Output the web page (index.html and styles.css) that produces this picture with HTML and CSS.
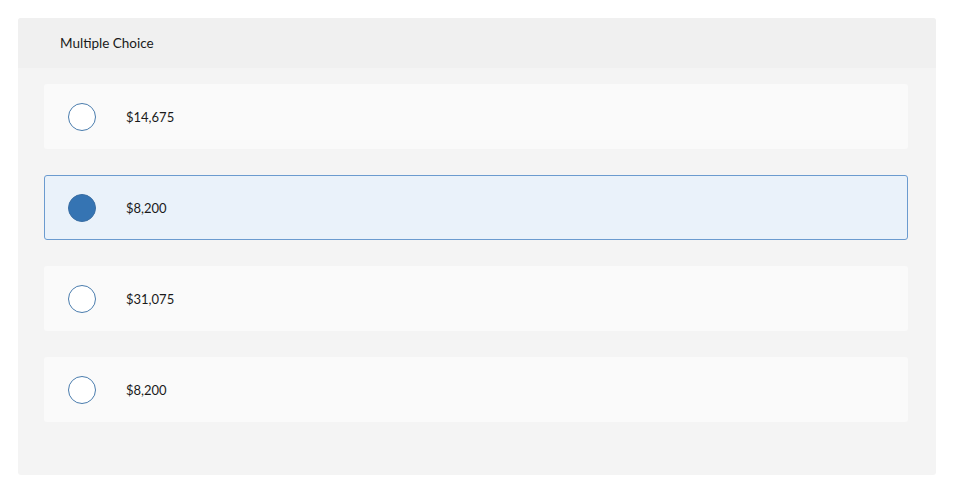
FILE: index.html
```html
<!DOCTYPE html>
<html>
<head>
<meta charset="utf-8">
<link rel="stylesheet" href="styles.css">
</head>
<body>
<div class="panel">
  <div class="panel-header">Multiple Choice</div>
  <div class="panel-body">
    <div class="option"><span class="radio"></span><span class="label">$14,675</span></div>
    <div class="option selected"><span class="radio"></span><span class="label">$8,200</span></div>
    <div class="option"><span class="radio"></span><span class="label">$31,075</span></div>
    <div class="option"><span class="radio"></span><span class="label">$8,200</span></div>
  </div>
</div>
</body>
</html>
```
FILE: styles.css
```css
html, body {
  margin: 0;
  padding: 0;
  background: #ffffff;
}
body {
  padding: 18px 24px 0 18px;
  font-family: "Lato", "Open Sans", sans-serif;
  color: #1f1f1f;
}
.panel {
  width: 918px;
  height: 457px;
  background: #f4f4f4;
  border-radius: 3px;
  overflow: hidden;
  display: flex;
  flex-direction: column;
}
.panel-header {
  height: 50px;
  background: #f0f0f0;
  display: flex;
  align-items: center;
  padding-left: 42px;
  font-size: 13.5px;
  color: #1a1a1a;
}
.panel-body {
  padding: 16px 28px 0 26px;
  display: flex;
  flex-direction: column;
  gap: 26px;
}
.option {
  height: 65px;
  box-sizing: border-box;
  background: #fafafa;
  border-radius: 3px;
  display: flex;
  align-items: center;
  padding-left: 23px;
  border: 1px solid transparent;
}
.option.selected {
  background: #eaf2fa;
  border-color: #6b9bcf;
}
.radio {
  width: 28px;
  height: 28px;
  box-sizing: border-box;
  border-radius: 50%;
  border: 1.5px solid #4a7cad;
  background: #ffffff;
  flex: none;
}
.option.selected .radio {
  background: #3574b3;
  border-color: #3a6ea3;
}
.label {
  margin-left: 30px;
  font-size: 13px;
  color: #1a1a1a;
}
```
